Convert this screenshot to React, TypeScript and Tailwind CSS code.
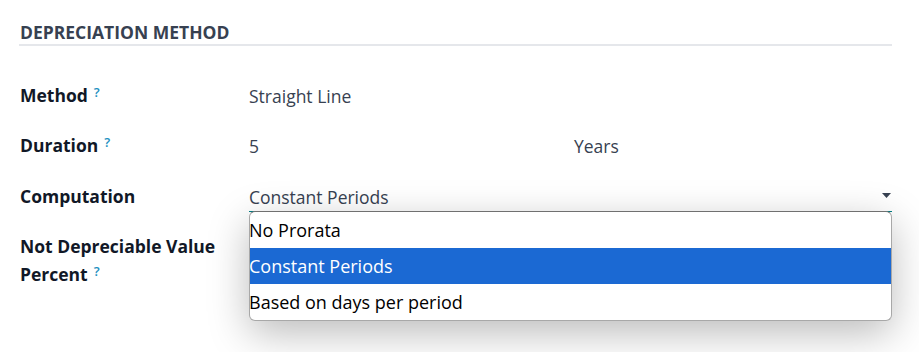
import React from "react";

function Q() {
  return <sup className="ml-[6px] text-[13px] font-semibold text-[#1b8fc0] relative top-[-5px]">?</sup>;
}

export default function App() {
  const font = { fontFamily: '"Open Sans", "Noto Sans", sans-serif' };
  return (
    <div className="w-[919px] h-[352px] bg-white overflow-hidden" style={font}>
      <div className="pl-[19px] pr-[27px] pt-[20px]">
        <div className="border-b-2 border-[#e5e7eb] pl-[1px] text-[17.5px] font-bold text-[#374151] leading-[24px]">
          DEPRECIATION METHOD
        </div>
        <div className="grid grid-cols-[229px_1fr] mt-[37px] pl-[1px]">
          <div className="h-[50px] text-[17.5px] font-bold text-[#111827] leading-[24px]">Method<Q /></div>
          <div className="h-[50px] text-[17.5px] text-[#374151] leading-[24px] pt-[1px]">Straight Line</div>

          <div className="h-[50px] text-[17.5px] font-bold text-[#111827] leading-[24px]">Duration<Q /></div>
          <div className="h-[50px] text-[17.5px] text-[#374151] leading-[24px] pt-[1px] flex">
            <span className="w-[325px]">5</span>
            <span>Years</span>
          </div>

          <div className="h-[50px] text-[17.5px] font-bold text-[#111827] leading-[24px] pt-[1px]">Computation</div>
          <div className="relative h-[50px]">
            <div className="flex items-start justify-between border-b border-[#017e84] h-[29px] text-[17.5px] text-[#374151] leading-[24px] pt-[2px]">
              <span>Constant Periods</span>
              <svg width="9" height="5" viewBox="0 0 9 5" className="mt-[8px] mr-[1px]">
                <path d="M0 0 H9 L4.5 5 Z" fill="#374151" />
              </svg>
            </div>
            <div className="absolute left-0 right-0 top-[28px] z-10 bg-white rounded-[6px] border border-[#a8a8a8] border-t-[#707070] overflow-hidden shadow-[0_12px_40px_rgba(0,0,0,0.27)] text-[18px] text-black leading-[36px]">
              <div className="h-[36px] -ml-[1px]">No Prorata</div>
              <div className="h-[36px] bg-[#1b69d3] text-white"><span className="-ml-[1px]">Constant Periods</span></div>
              <div className="h-[36px] -ml-[1px]">Based on days per period</div>
            </div>
          </div>

          <div className="text-[17.5px] font-bold text-[#111827] leading-[28px] -mt-[1px]">
            Not Depreciable Value<br />Percent<Q />
          </div>
          <div></div>
        </div>
      </div>
    </div>
  );
}
